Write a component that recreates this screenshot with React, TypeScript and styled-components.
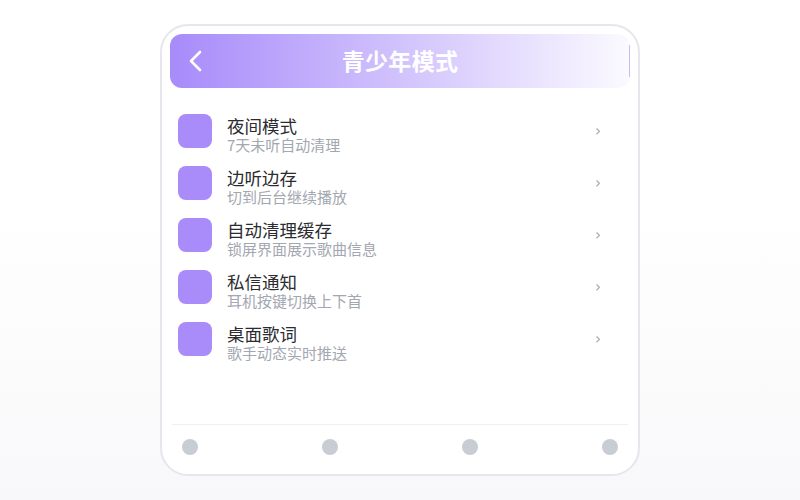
import React from 'react';
import styled, { createGlobalStyle } from 'styled-components';

// Types
interface SettingItem {
  title: string;
  desc: string;
}

const items: SettingItem[] = [
  { title: '夜间模式', desc: '7天未听自动清理' },
  { title: '边听边存', desc: '切到后台继续播放' },
  { title: '自动清理缓存', desc: '锁屏界面展示歌曲信息' },
  { title: '私信通知', desc: '耳机按键切换上下首' },
  { title: '桌面歌词', desc: '歌手动态实时推送' },
];

// Styled components
const GlobalStyle = createGlobalStyle`
  html, body {
    margin: 0;
    padding: 0;
  }
  body {
    font-family: 'Noto Sans CJK SC', 'Noto Sans', sans-serif;
    background: linear-gradient(180deg, #ffffff 0%, #ffffff 40%, #f8f8fa 100%);
  }
`;

const Page = styled.div`
  width: 800px;
  height: 500px;
  display: flex;
  align-items: center;
  justify-content: center;
`;

const Phone = styled.div`
  box-sizing: border-box;
  width: 480px;
  height: 452px;
  border: 2px solid #e6e6ec;
  border-radius: 28px;
  background: #ffffff;
  padding: 8px 8px 0;
  display: flex;
  flex-direction: column;
`;

const Header = styled.div`
  position: relative;
  height: 54px;
  border-radius: 12px;
  background: linear-gradient(90deg, #a78bfa 0%, #fbfaff 100%);
  display: grid;
  grid-template-columns: 44px 1fr 44px;
  align-items: center;

  &::after {
    content: '';
    position: absolute;
    right: 0;
    top: 11px;
    bottom: 11px;
    width: 1px;
    background: #c9b8fd;
  }
`;

const BackButton = styled.button`
  border: none;
  background: transparent;
  padding: 0 0 0 19px;
  height: 54px;
  display: flex;
  align-items: center;
  cursor: pointer;
`;

const Title = styled.h1`
  margin: 0 0 3px;
  text-align: center;
  font-size: 23px;
  font-weight: 700;
  color: #ffffff;
  letter-spacing: 0.3px;
`;

const List = styled.div`
  flex: 1;
  padding: 17px 8px 0;
  display: flex;
  flex-direction: column;
`;

const Row = styled.div`
  height: 52px;
  box-sizing: border-box;
  padding: 9px 0;
  display: flex;
  align-items: flex-start;
  gap: 15px;
`;

const IconBox = styled.div`
  width: 34px;
  height: 34px;
  flex: none;
  border-radius: 8px;
  background: #a98bfa;
`;

const TextBlock = styled.div`
  flex: 1;
  margin-top: 1px;
  display: flex;
  flex-direction: column;
`;

const ItemTitle = styled.div`
  font-size: 17.5px;
  line-height: 21px;
  color: #2b2b30;
`;

const ItemDesc = styled.div`
  font-size: 15px;
  line-height: 18px;
  color: #a3a7b0;
`;

const Chevron = styled.span`
  align-self: center;
  margin-right: 21px;
  font-size: 15px;
  line-height: 1;
  color: #a0a4ad;
  font-family: 'DejaVu Sans', sans-serif;
`;

const Footer = styled.div`
  margin: 0 2px;
  border-top: 1px solid #efeff2;
  padding: 14px 10px 19px;
  display: flex;
  justify-content: space-between;
`;

const Dot = styled.div`
  width: 16px;
  height: 16px;
  border-radius: 50%;
  background: #c8ccd3;
`;

const App: React.FC = () => {
  return (
    <Page>
      <GlobalStyle />
      <Phone>
        <Header>
          <BackButton aria-label="返回">
            <svg width="14" height="22" viewBox="0 0 14 22" fill="none">
              <polyline
                points="11,2 2,11 11,20"
                stroke="#ffffff"
                strokeWidth="2.6"
                strokeLinecap="round"
                strokeLinejoin="round"
              />
            </svg>
          </BackButton>
          <Title>青少年模式</Title>
          <span />
        </Header>

        <List>
          {items.map(item => (
            <Row key={item.title}>
              <IconBox />
              <TextBlock>
                <ItemTitle>{item.title}</ItemTitle>
                <ItemDesc>{item.desc}</ItemDesc>
              </TextBlock>
              <Chevron>›</Chevron>
            </Row>
          ))}
        </List>

        <Footer>
          <Dot />
          <Dot />
          <Dot />
          <Dot />
        </Footer>
      </Phone>
    </Page>
  );
};

export default App;
